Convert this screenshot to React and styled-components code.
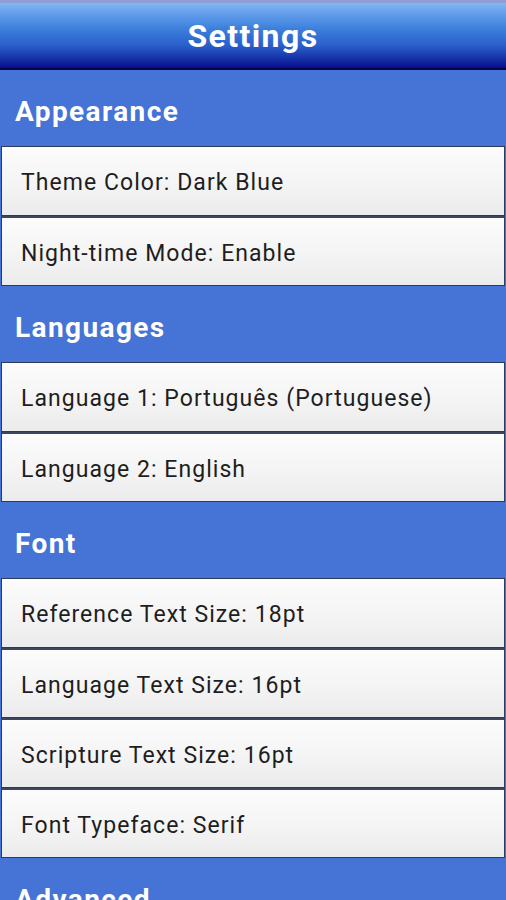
import React from "react";
import styled, { createGlobalStyle } from "styled-components";

const Global = createGlobalStyle`
  html, body { margin: 0; padding: 0; background: #4673d6; }
  body { font-family: Roboto, "Noto Sans", sans-serif; overflow: hidden; }
`;

const Screen = styled.div`
  width: 506px;
  height: 900px;
  overflow: hidden;
  display: flex;
  flex-direction: column;
  background: #4673d6;
`;

const TitleBar = styled.header`
  box-sizing: border-box;
  height: 70px;
  flex: none;
  display: flex;
  align-items: center;
  justify-content: center;
  border-top: 3px solid #8f9fd6;
  border-bottom: 2px solid #050640;
  background: linear-gradient(
    to bottom,
    #86b6f2 0%,
    #6ba4ee 12%,
    #3b7fdc 40%,
    #2a5fcc 65%,
    #1733a8 85%,
    #0a0c8e 100%
  );
`;

const Title = styled.h1`
  margin: 0;
  color: #fff;
  font-size: 32px;
  font-weight: 700;
  letter-spacing: 1.4px;
`;

const Section = styled.section`
  display: flex;
  flex-direction: column;
  flex: none;
`;

const SectionHeader = styled.h2`
  box-sizing: border-box;
  margin: 0;
  height: 76px;
  display: flex;
  align-items: center;
  padding-left: 15px;
  padding-top: 6px;
  color: #fff;
  font-size: 28px;
  font-weight: 700;
  letter-spacing: 1.4px;
`;

const List = styled.div`
  display: flex;
  flex-direction: column;
  padding: 0 1px;
`;

const Item = styled.div`
  box-sizing: border-box;
  height: 70px;
  display: flex;
  align-items: center;
  padding-left: 19px;
  padding-top: 3px;
  border: 1px solid #2f3a58;
  background: linear-gradient(to bottom, #fcfcfc 0%, #f4f4f4 55%, #ebebeb 100%);
  color: #1e1e1e;
  font-size: 23px;
  font-weight: 400;
  letter-spacing: 1.05px;
  & + & { border-top: 2px solid #3c4660; }
`;

const sections = [
  { title: "Appearance", items: ["Theme Color: Dark Blue", "Night-time Mode: Enable"] },
  { title: "Languages", items: ["Language 1: Português (Portuguese)", "Language 2: English"] },
  {
    title: "Font",
    items: [
      "Reference Text Size: 18pt",
      "Language Text Size: 16pt",
      "Scripture Text Size: 16pt",
      "Font Typeface: Serif",
    ],
  },
  { title: "Advanced", items: ["Clear Cache"] },
];

export default function App() {
  return (
    <Screen>
      <Global />
      <TitleBar>
        <Title>Settings</Title>
      </TitleBar>
      {sections.map((s) => (
        <Section key={s.title}>
          <SectionHeader>{s.title}</SectionHeader>
          <List>
            {s.items.map((it) => (
              <Item key={it}>{it}</Item>
            ))}
          </List>
        </Section>
      ))}
    </Screen>
  );
}
